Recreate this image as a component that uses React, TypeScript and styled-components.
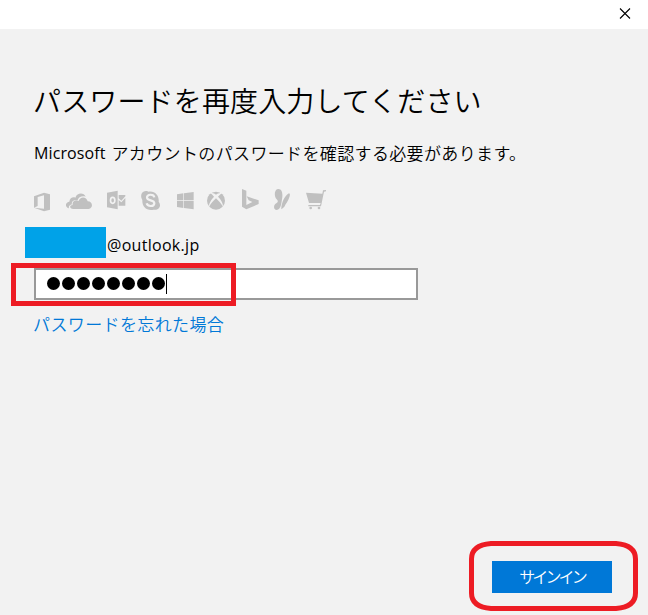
import React from "react";
import styled, { createGlobalStyle } from "styled-components";

const GlobalStyle = createGlobalStyle`
  * { box-sizing: border-box; }
  body {
    margin: 0;
    background: #f2f2f2;
    color: #000;
    font-family: "Open Sans", "Noto Sans CJK JP", sans-serif;
    overflow: hidden;
  }
`;

const Dialog = styled.div`
  width: 648px;
  height: 615px;
  display: flex;
  flex-direction: column;
  background: #f2f2f2;
`;

const TitleBar = styled.header`
  height: 29px;
  flex: none;
  display: flex;
  justify-content: flex-end;
  padding: 8px 17px 0 0;
  background: #fff;
`;

const CloseButton = styled.button`
  width: 12px;
  height: 12px;
  padding: 0;
  border: 0;
  background: none;
  display: flex;
`;

const Content = styled.main`
  flex: 1;
  display: flex;
  flex-direction: column;
  align-items: flex-start;
  padding: 51px 0 0 34px;
`;

const Heading = styled.h1`
  margin: 0 0 0 -1px;
  height: 40px;
  line-height: 40px;
  font-size: 28px;
  font-weight: 350;
  letter-spacing: 0.15px;
  white-space: nowrap;
  font-family: "Noto Sans CJK JP", sans-serif;
`;

const Description = styled.p`
  margin: 21px 0 0;
  height: 24px;
  line-height: 24px;
  font-size: 17px;
  white-space: nowrap;
  display: flex;
  gap: 6px;
`;

const Latin = styled.span`
  font-family: "Open Sans", sans-serif;
  font-size: 16px;
  font-weight: 400;
  letter-spacing: 0.1px;
`;

const Kana = styled.span`
  font-family: "Noto Sans CJK JP", sans-serif;
  font-size: 17px;
  font-weight: 350;
  letter-spacing: 0.36px;
`;

const Services = styled.div`
  display: flex;
  height: 24px;
  margin-top: 23px;
`;

const ServiceIcon = styled.svg<{ $gap: number }>`
  flex: none;
  height: 24px;
  margin-left: ${(p) => p.$gap}px;
  fill: #c0c0c0;
`;

const Account = styled.div`
  display: flex;
  align-items: center;
  gap: 1px;
  height: 31px;
  margin: 15px 0 0 -9px;
`;

const Redaction = styled.span`
  width: 81px;
  height: 31px;
  background: #00a2e8;
`;

const Address = styled(Latin)`
  line-height: 31px;
  padding-top: 5px;
  letter-spacing: 0.3px;
`;

const Field = styled.div`
  position: relative;
  width: 384px;
  height: 32px;
  margin-top: 10px;
  padding: 0 0 1px 11px;
  display: flex;
  align-items: center;
  gap: 2px;
  border: 2px solid #999;
  background: #fff;
`;

const MaskDot = styled.span`
  width: 13px;
  height: 13px;
  border-radius: 50%;
  background: #000;
`;

const Caret = styled.span`
  width: 1px;
  height: 20px;
  margin-left: -1px;
  background: #000;
`;

const FieldMarker = styled.span`
  position: absolute;
  left: -25px;
  top: -7px;
  width: 225px;
  height: 43px;
  border: 5px solid #ed1c24;
`;

const ForgotLink = styled.a`
  margin: 11px 0 0 -1px;
  height: 26px;
  line-height: 26px;
  font-family: "Noto Sans CJK JP", sans-serif;
  font-size: 17px;
  font-weight: 350;
  letter-spacing: 0.38px;
  color: #0078d7;
  white-space: nowrap;
`;

const Footer = styled.footer`
  display: flex;
  justify-content: flex-end;
  padding: 0 36px 22px 0;
`;

const SignIn = styled.button`
  position: relative;
  width: 120px;
  height: 32px;
  padding: 0 0 2px;
  border: 0;
  background: #0078d7;
  color: #fff;
  font-family: "Noto Sans CJK JP", sans-serif;
  font-size: 16px;
  font-weight: 350;
  letter-spacing: -2.9px;
  line-height: 30px;
`;

const ButtonMarker = styled.svg`
  position: absolute;
  left: -23px;
  top: -20px;
  fill: none;
  stroke: #ed1c24;
  stroke-width: 5;
`;

type Icon = { name: string; gap: number; width: number; box: string; art: React.ReactNode };

const hole = "#f2f2f2";

const icons: Icon[] = [
  {
    name: "Office", gap: 0, width: 16, box: "42 24 48 72",
    art: <path fillRule="evenodd" d="M42 49L72 38L90 43V89L72 94L42 83L72 86V46L53 51V78L42 83Z" />,
  },
  {
    name: "OneDrive", gap: 16, width: 26, box: "138 24 78 72",
    art: (
      <>
        <path d="M147 85C134 82 135 67 148 65C149 54 159 50 166 53C171 38 191 36 197 50C184 47 176 52 173 60C160 58 153 66 156 73C148 75 145 80 147 85Z" />
        <path d="M160 87C147 86 148 75 158 75C155 63 169 58 176 63C180 48 200 49 203 64C218 64 221 84 206 87Z" />
      </>
    ),
  },
  {
    name: "Outlook", gap: 15, width: 19, box: "261 24 57 72",
    art: (
      <>
        <path d="M261 38L293 32V88L261 82Z" />
        <path d="M296 45H316V49L304 62L296 55ZM296 60L304 67L316 54V77H296Z" />
        <ellipse cx="278" cy="61" rx="6.5" ry="9" fill="none" stroke={hole} strokeWidth="5" />
      </>
    ),
  },
  {
    name: "Skype", gap: 15, width: 20, box: "363 24 60 72",
    art: (
      <>
        <path d="M377 33C382 33 384 35 386 35C406 32 418 48 416 65C426 78 416 92 401 89C378 93 366 79 367 60C359 46 365 34 377 33Z" />
        <path d="M403 52C401 41 380 42 381 53C382 64 403 58 403 70C402 81 382 80 380 70" fill="none" stroke={hole} strokeWidth="6.5" />
      </>
    ),
  },
  {
    name: "Windows", gap: 16, width: 17, box: "21 24 51 72",
    art: <path d="M21 43L40 40V61H21ZM42 40L71 36V61H42ZM21 63H40V84L21 81ZM42 63H71V88L42 84Z" />,
  },
  {
    name: "Xbox", gap: 13, width: 18, box: "111 24 54 72",
    art: (
      <>
        <circle cx="138" cy="62" r="27" />
        <path d="M122 40C128 38 133 41 138 44C143 41 149 38 155 40C151 43 147 47 144 50C153 59 160 70 159 80C154 72 146 62 138 55C130 62 122 72 117 80C116 70 124 59 132 50C129 46 125 43 122 40Z" fill={hole} />
      </>
    ),
  },
  {
    name: "Bing", gap: 17, width: 17, box: "217 24 51 72",
    art: <path d="M217 27L230 32V75L248 66L237 61L231 49L267 61V72L230 88L217 80Z" />,
  },
  {
    name: "MSN", gap: 15, width: 17, box: "312 24 51 72",
    art: (
      <>
        <path d="M324 27C337 26 339 42 336 58C334 70 333 90 320 90C310 90 309 74 320 69C325 66 324 61 320 58C312 49 312 29 324 27Z" />
        <path d="M334 88C333 72 344 46 357 40C364 41 356 62 346 74C344 82 340 82 334 88Z" />
      </>
    ),
  },
  {
    name: "Store", gap: 15, width: 20, box: "408 24 60 72",
    art: (
      <>
        <path d="M408 38L457 41L459 31L468 30V34L462 35L453 79H415V75H450L452 69H417Z" />
        <circle cx="422" cy="84" r="4" />
        <circle cx="447" cy="84" r="4" />
      </>
    ),
  },
];

export default function App() {
  return (
    <>
      <GlobalStyle />
      <Dialog>
        <TitleBar>
          <CloseButton aria-label="閉じる">
            <svg width="12" height="12" viewBox="0 0 12 12">
              <path d="M1 0.5L11 10.5M11 0.5L1 10.5" stroke="#000" strokeWidth="1.1" />
            </svg>
          </CloseButton>
        </TitleBar>
        <Content>
          <Heading>パスワードを再度入力してください</Heading>
          <Description>
            <Latin>Microsoft</Latin>
            <Kana>アカウントのパスワードを確認する必要があります。</Kana>
          </Description>
          <Services>
            {icons.map((i) => (
              <ServiceIcon key={i.name} $gap={i.gap} width={i.width} viewBox={i.box} aria-label={i.name}>
                {i.art}
              </ServiceIcon>
            ))}
          </Services>
          <Account>
            <Redaction />
            <Address>@outlook.jp</Address>
          </Account>
          <Field>
            {Array.from({ length: 8 }, (_, i) => (
              <MaskDot key={i} />
            ))}
            <Caret />
            <FieldMarker />
          </Field>
          <ForgotLink>パスワードを忘れた場合</ForgotLink>
        </Content>
        <Footer>
          <SignIn>
            サインイン
            <ButtonMarker width="169" height="70" viewBox="0 0 169 70">
              <path d="M22 2.5H147Q166.500 4 166.500 18V52Q166.500 66 147 67.500H22Q2.500 66 2.500 52V18Q2.500 4 22 2.500Z" />
            </ButtonMarker>
          </SignIn>
        </Footer>
      </Dialog>
    </>
  );
}
